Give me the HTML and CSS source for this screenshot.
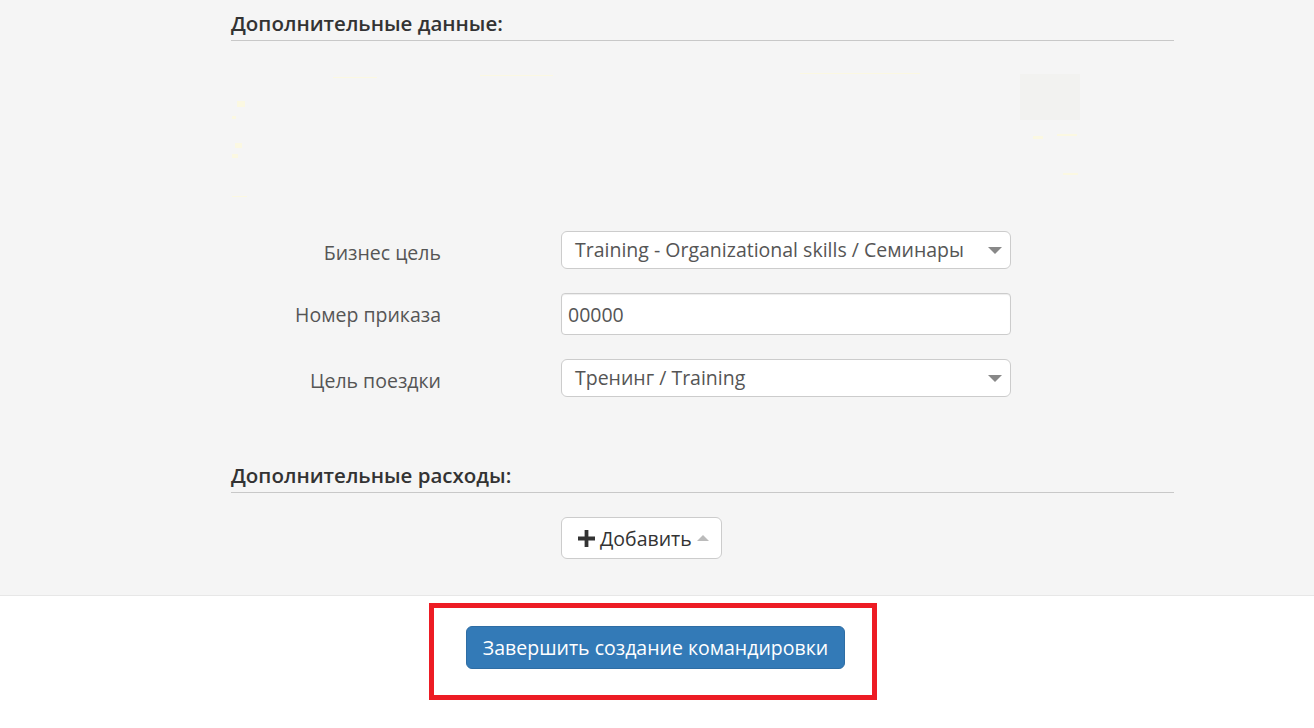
FILE: index.html
```html
<!DOCTYPE html>
<html lang="en">
<head>
    <meta charset="UTF-8">
    <title>Командировка</title>
    <link rel="stylesheet" href="styles.css">
</head>
<body>
    <div id="trip-form">
        <h4 class="section-title">Дополнительные данные:</h4>
        <div class="redacted-area"></div>

        <div class="form-row">
            <label class="form-label select-label">Бизнес цель</label>
            <div class="select-box">
                <span>Training - Organizational skills / Семинары</span>
                <span class="caret-down"></span>
            </div>
        </div>
        <div class="form-row">
            <label class="form-label" for="order-number">Номер приказа</label>
            <input type="text" id="order-number" class="text-input" value="00000">
        </div>
        <div class="form-row form-row-last">
            <label class="form-label select-label">Цель поездки</label>
            <div class="select-box">
                <span>Тренинг / Training</span>
                <span class="caret-down"></span>
            </div>
        </div>

        <h4 class="section-title section-title-second">Дополнительные расходы:</h4>
        <div class="add-row">
            <button class="add-btn">
                <svg class="plus-icon" viewBox="0 0 18 18"><path d="M7 0h4v7h7v4h-7v7H7v-7H0V7h7z"/></svg>
                Добавить
                <span class="caret-up"></span>
            </button>
        </div>
    </div>

    <div id="form-footer">
        <div class="highlight-box">
            <button class="finish-btn">Завершить создание командировки</button>
        </div>
    </div>
</body>
</html>
```

FILE: styles.css
```css
html, body {
    height: 100%;
}

body {
    margin: 0;
    background-color: #ffffff;
    font-family: 'Open Sans', 'Noto Sans', sans-serif;
    font-size: 19.5px;
    color: #555555;
}

#trip-form {
    height: 595px;
    padding: 0 140px 0 231px;
    background-color: #f5f5f5;
    border-bottom: 1px solid #e7e7e7;
}

.section-title {
    margin: 0;
    height: 40px;
    border-bottom: 1px solid #c8c8c8;
    font-size: 20.5px;
    font-weight: 600;
    line-height: 47px;
    color: #333333;
}

/* blurred-out block, only the faint leftovers of it show */
.redacted-area {
    height: 190px;
    background-image:
        linear-gradient(#f2f2f0, #f2f2f0),
        linear-gradient(#fbf8e2, #fbf8e2),
        linear-gradient(#fbf8e2, #fbf8e2),
        linear-gradient(#fbf8e2, #fbf8e2),
        linear-gradient(#fbf8e2, #fbf8e2),
        linear-gradient(#fbf8e2, #fbf8e2),
        linear-gradient(#fbf8e2, #fbf8e2),
        linear-gradient(#fbf8e2, #fbf8e2),
        linear-gradient(#fbf8e2, #fbf8e2),
        linear-gradient(#fbf8e2, #fbf8e2),
        linear-gradient(#fbf8e2, #fbf8e2),
        linear-gradient(#fbf8e2, #fbf8e2);
    background-repeat: no-repeat;
    background-size:
        60px 46px, 8px 6px, 4px 3px, 7px 5px, 6px 4px, 15px 1px,
        44px 1px, 73px 1px, 120px 1px, 10px 3px, 20px 2px, 15px 2px;
    background-position:
        789px 33px, 6px 60px, 1px 75px, 4px 102px, 1px 113px, 1px 155px,
        102px 36px, 249px 34px, 569px 32px, 802px 95px, 826px 93px, 832px 132px;
}

.form-row {
    display: flex;
    align-items: center;
    margin-bottom: 24px;
}

.form-row-last {
    margin-bottom: 19px;
}

.form-label {
    width: 210px;
    text-align: right;
    margin-right: 120px;
}

.select-label {
    padding-top: 4px;
}

.select-box {
    display: flex;
    justify-content: space-between;
    align-items: center;
    box-sizing: border-box;
    width: 450px;
    height: 38px;
    padding: 0 8px 0 13px;
    background-color: #ffffff;
    border: 1px solid #cccccc;
    border-radius: 6px;
    line-height: 1;
}

.caret-down {
    width: 0;
    height: 0;
    border-left: 7px solid transparent;
    border-right: 7px solid transparent;
    border-top: 7px solid #888888;
}

.text-input {
    box-sizing: border-box;
    width: 450px;
    height: 42px;
    padding: 0 6px;
    background-color: #ffffff;
    border: 1px solid #cccccc;
    border-radius: 4px;
    box-shadow: inset 0 1px 1px rgba(0, 0, 0, 0.075);
    font-family: inherit;
    font-size: 19.5px;
    color: #555555;
}

.section-title-second {
    margin-top: 55px;
}

.add-row {
    margin-top: 24px;
    padding-left: 330px;
}

.add-btn {
    display: inline-flex;
    align-items: center;
    box-sizing: border-box;
    width: 161px;
    height: 42px;
    padding: 0 0 0 16px;
    background-color: #ffffff;
    border: 1px solid #cccccc;
    border-radius: 6px;
    font-family: inherit;
    font-size: 19.5px;
    color: #333333;
}

.plus-icon {
    width: 17px;
    height: 17px;
    margin-right: 5px;
    fill: #333333;
}

.caret-up {
    width: 0;
    height: 0;
    margin-left: 5px;
    border-left: 6px solid transparent;
    border-right: 6px solid transparent;
    border-bottom: 6px solid #bbbbbb;
}

#form-footer {
    display: flex;
    justify-content: center;
    padding: 7px 8px 0 0;
}

.highlight-box {
    display: flex;
    justify-content: center;
    box-sizing: border-box;
    width: 448px;
    height: 97px;
    padding: 18px 0 0 5px;
    border: 5px solid #ed1c24;
}

.finish-btn {
    box-sizing: border-box;
    width: 379px;
    height: 43px;
    background-color: #337ab7;
    border: 1px solid #2e6da4;
    border-radius: 6px;
    font-family: inherit;
    font-size: 19.5px;
    color: #ffffff;
}
```
